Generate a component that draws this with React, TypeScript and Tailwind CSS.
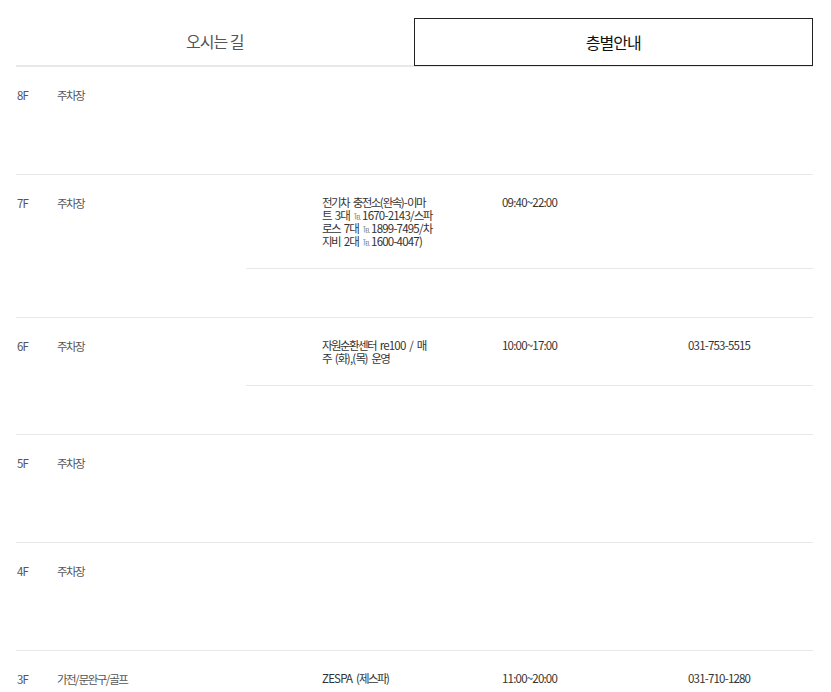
import React from "react";

type Shop = { name: string[]; hours: string; tel: string };
type Floor = { floor: string; category: string; shops: Shop[] };

const floors: Floor[] = [
  { floor: "8F", category: "주차장", shops: [] },
  {
    floor: "7F",
    category: "주차장",
    shops: [
      {
        name: ["전기차 충전소(완속)-이마", "트 3대 ℡1670-2143/스파", "로스 7대 ℡1899-7495/차", "지비 2대 ℡1600-4047)"],
        hours: "09:40~22:00",
        tel: "",
      },
    ],
  },
  {
    floor: "6F",
    category: "주차장",
    shops: [{ name: ["자원순환센터 re100 / 매", "주 (화),(목) 운영"], hours: "10:00~17:00", tel: "031-753-5515" }],
  },
  { floor: "5F", category: "주차장", shops: [] },
  { floor: "4F", category: "주차장", shops: [] },
  {
    floor: "3F",
    category: "가전/문완구/골프",
    shops: [{ name: ["ZESPA (제스파)"], hours: "11:00~20:00", tel: "031-710-1280" }],
  },
];

// hangul is set tighter than latin, the tel mark is a tiny glyph
const Txt = ({ t }: { t: string }) => (
  <>
    {t.split(/([\u3131-\uD79D]+|℡)/).map((p, i) => {
      if (p === "℡")
        return (
          <span key={i} className="mx-[1px] inline-block align-[1px] text-[7px] leading-[7px] tracking-normal text-[#666]">
            ℡
          </span>
        );
      if (/[\u3131-\uD79D]/.test(p))
        return (
          <span key={i} className="tracking-[-1.6px]">
            {p}
          </span>
        );
      return p;
    })}
  </>
);

const FloorRow = ({ f }: { f: Floor }) => (
  <div className="flex border-t border-[#e8e8e8] pb-[48px]">
    <div className="w-[41px] shrink-0 pl-[1px] pt-[22px] text-[#555]">{f.floor}</div>
    <div className="w-[189px] shrink-0 pt-[22px] text-[#555]">
      <Txt t={f.category} />
    </div>
    <div className="flex-1">
      {f.shops.length === 0 ? (
        <div className="h-[59px]" />
      ) : (
        f.shops.map((s, i) => (
          <div key={i} className="flex border-b border-[#e8e8e8] pt-[21px] pb-[20px] text-[#333]">
            <div className="ml-[76px] w-[120px] shrink-0">
              {s.name.map((l, j) => (
                <div key={j} className="h-[13px] whitespace-nowrap">
                  <Txt t={l} />
                </div>
              ))}
            </div>
            <div className="ml-[60px] w-[186px] shrink-0">{s.hours}</div>
            <div>{s.tel}</div>
          </div>
        ))
      )}
    </div>
  </div>
);

export default function App() {
  return (
    <div
      className="min-h-screen bg-white pl-[16px] pr-[18px] pt-[18px] text-[11.5px] leading-[13px] tracking-[-0.8px] [word-spacing:2px]"
      style={{ fontFamily: '"Noto Sans CJK KR", "Noto Sans", sans-serif' }}
    >
      <div className="flex">
        <button className="h-[48px] flex-1 border-b border-[#e8e8e8] text-[16px] tracking-[-1px] text-[#555]">
          오시는 길
        </button>
        <button className="h-[48px] flex-1 border border-[#222] text-[16px] tracking-[-1px] text-[#111]">
          층별안내
        </button>
      </div>
      <div>
        {floors.map((f) => (
          <FloorRow key={f.floor} f={f} />
        ))}
      </div>
    </div>
  );
}
